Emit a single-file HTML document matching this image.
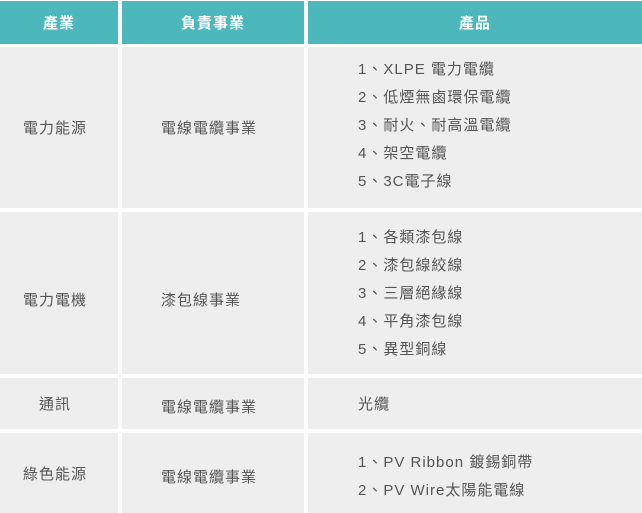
<!DOCTYPE html>
<html><head><meta charset="utf-8"><style>
body{margin:0;width:642px;height:513px;background:#fff;overflow:hidden;font-family:"Liberation Sans","Noto Sans CJK TC",sans-serif;font-size:15px;color:#555;letter-spacing:1px}
.c{position:absolute;background:#eeeeee;display:flex;align-items:center;justify-content:center;box-sizing:border-box}
.h{background:#4db8bc;color:#fff;font-weight:bold;font-size:15px}
.a{justify-content:flex-start;padding-left:23px}
.b{justify-content:flex-start;padding-left:39px}
.l{justify-content:flex-start;padding-left:50px}
.l div{line-height:28px}
</style></head><body>
<div class="c h" style="left:0;top:1px;width:118px;height:43px">產業</div>
<div class="c h" style="left:122px;top:1px;width:182px;height:43px">負責事業</div>
<div class="c h" style="left:308px;top:1px;width:334px;height:43px">產品</div>

<div class="c a" style="left:0;top:47px;width:118px;height:161px">電力能源</div>
<div class="c b" style="left:122px;top:47px;width:182px;height:161px">電線電纜事業</div>
<div class="c l" style="left:308px;top:47px;width:334px;height:161px"><div style="margin-top:-4px">1、XLPE 電力電纜<br>2、低煙無鹵環保電纜<br>3、耐火、耐高溫電纜<br>4、架空電纜<br>5、3C電子線</div></div>

<div class="c a" style="left:0;top:212px;width:118px;height:162px;padding-top:12px">電力電機</div>
<div class="c b" style="left:122px;top:212px;width:182px;height:162px;padding-top:12px">漆包線事業</div>
<div class="c l" style="left:308px;top:212px;width:334px;height:162px"><div style="margin-top:2px">1、各類漆包線<br>2、漆包線絞線<br>3、三層絕緣線<br>4、平角漆包線<br>5、異型銅線</div></div>

<div class="c a" style="left:0;top:378px;width:118px;height:51px;padding-left:39px">通訊</div>
<div class="c b" style="left:122px;top:378px;width:182px;height:51px;padding-top:6px">電線電纜事業</div>
<div class="c l" style="left:308px;top:378px;width:334px;height:51px">光纜</div>

<div class="c a" style="left:0;top:433px;width:118px;height:80px">綠色能源</div>
<div class="c b" style="left:122px;top:433px;width:182px;height:80px;padding-top:6px">電線電纜事業</div>
<div class="c l" style="left:308px;top:433px;width:334px;height:80px"><div style="margin-top:8px">1、PV Ribbon 鍍錫銅帶<br>2、PV Wire太陽能電線</div></div>
</body></html>
